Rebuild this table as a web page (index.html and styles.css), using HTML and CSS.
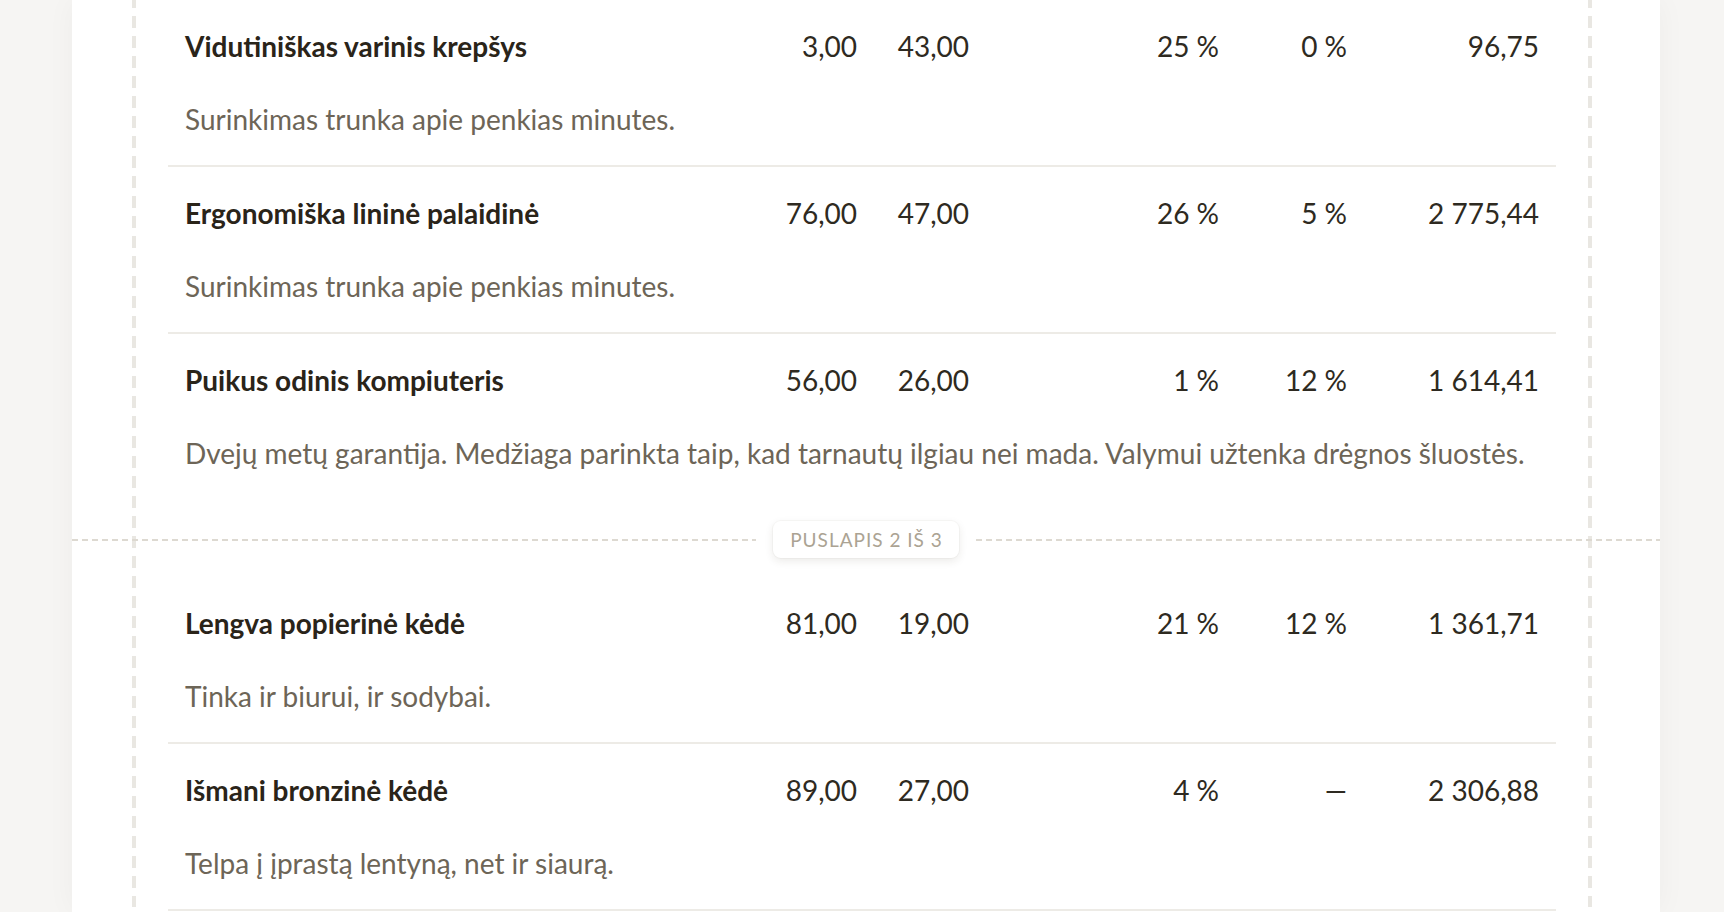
FILE: index.html
```html
<!DOCTYPE html>
<html lang="lt">
<head>
  <meta charset="UTF-8" />
  <title>Sąskaita – peržiūra</title>
  <meta name="viewport" content="width=device-width, initial-scale=1">
  <link rel="stylesheet" href="styles.css">
</head>
<body>
  <div class="sheet">
    <div class="page">

      <div class="item">
        <div class="item-name">Vidutiniškas varinis krepšys</div>
        <div class="num">3,00</div>
        <div class="num">43,00</div>
        <div class="num">25&nbsp;%</div>
        <div class="num">0&nbsp;%</div>
        <div class="num">96,75</div>
        <div class="item-note">Surinkimas trunka apie penkias minutes.</div>
      </div>

      <div class="item">
        <div class="item-name">Ergonomiška lininė palaidinė</div>
        <div class="num">76,00</div>
        <div class="num">47,00</div>
        <div class="num">26&nbsp;%</div>
        <div class="num">5&nbsp;%</div>
        <div class="num">2&nbsp;775,44</div>
        <div class="item-note">Surinkimas trunka apie penkias minutes.</div>
      </div>

      <div class="item last">
        <div class="item-name">Puikus odinis kompiuteris</div>
        <div class="num">56,00</div>
        <div class="num">26,00</div>
        <div class="num">1&nbsp;%</div>
        <div class="num">12&nbsp;%</div>
        <div class="num">1&nbsp;614,41</div>
        <div class="item-note">Dvejų metų garantija. Medžiaga parinkta taip, kad tarnautų ilgiau nei mada. Valymui užtenka drėgnos šluostės.</div>
      </div>

      <div class="page-break">
        <span class="page-label">Puslapis 2 iš 3</span>
      </div>

      <div class="item">
        <div class="item-name">Lengva popierinė kėdė</div>
        <div class="num">81,00</div>
        <div class="num">19,00</div>
        <div class="num">21&nbsp;%</div>
        <div class="num">12&nbsp;%</div>
        <div class="num">1&nbsp;361,71</div>
        <div class="item-note">Tinka ir biurui, ir sodybai.</div>
      </div>

      <div class="item">
        <div class="item-name">Išmani bronzinė kėdė</div>
        <div class="num">89,00</div>
        <div class="num">27,00</div>
        <div class="num">4&nbsp;%</div>
        <div class="num empty">—</div>
        <div class="num">2&nbsp;306,88</div>
        <div class="item-note">Telpa į įprastą lentyną, net ir siaurą.</div>
      </div>

    </div>
  </div>
</body>
</html>
```

FILE: styles.css
```css
body {
  margin: 0;
  font-family: Lato, 'Noto Sans', sans-serif;
  background: #f6f5f3;
  color: #2a2419;
}

.sheet {
  width: 1588px;
  margin-left: 72px;
  padding: 0 68px 0 60px;
  box-sizing: border-box;
  min-height: 100vh;
  background: #fff;
  box-shadow: 0 0 28px rgba(60, 50, 30, 0.04);
}

/* dashed margin guides on both sides of the printable area */
.page {
  padding: 0 36px;
  background-image:
    repeating-linear-gradient(to bottom, #e9e7e2 0 12px, transparent 12px 20px),
    repeating-linear-gradient(to bottom, #e9e7e2 0 12px, transparent 12px 20px);
  background-size: 4px 100%;
  background-position: left 0 top -4px, right 0 top -4px;
  background-repeat: no-repeat;
}

.item {
  display: grid;
  grid-template-columns: 1fr 112px 112px 250px 128px 192px;
  row-gap: 39px;
  padding: 29px 17px;
  border-bottom: 2px solid #edebe6;
  font-size: 28px;
  line-height: 34px;
}

.item.last {
  border-bottom: none;
}

.item-name {
  font-weight: 700;
  color: #2a2419;
}

.num {
  text-align: right;
  color: #2e2a21;
  white-space: nowrap;
}

.item-note {
  grid-column: 1 / -1;
  color: #6d6557;
}

.page-break {
  display: flex;
  align-items: center;
  gap: 17px;
  margin: 22px -104px 19px -96px;
}

.page-break::before,
.page-break::after {
  content: "";
  flex: 1;
  height: 2px;
  background: repeating-linear-gradient(to right, #ddd9d1 0 6px, transparent 6px 10px);
}

.page-label {
  height: 37px;
  line-height: 37px;
  padding: 0 16px 0 17px;
  font-size: 19px;
  letter-spacing: 1px;
  text-transform: uppercase;
  color: #aba393;
  background: #fff;
  border-radius: 8px;
  box-shadow: 0 3px 9px rgba(60, 50, 30, 0.10), 0 0 0 1px rgba(60, 50, 30, 0.03);
}
```
